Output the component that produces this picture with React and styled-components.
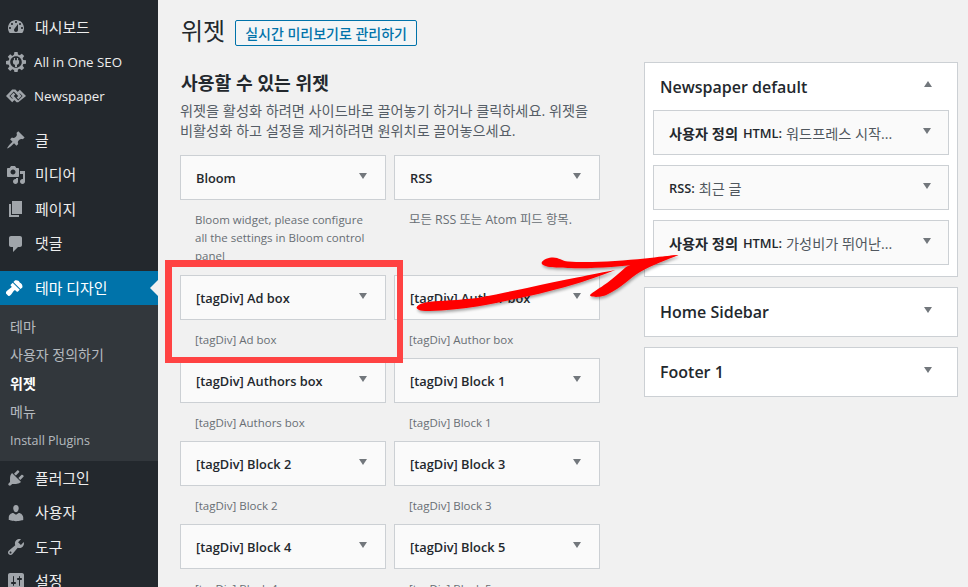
import React from 'react';
import styled, {createGlobalStyle} from 'styled-components';

const FONT = `"Open Sans", "Noto Sans CJK KR", sans-serif`;

const GlobalStyle = createGlobalStyle`
  html, body {
    margin: 0;
    padding: 0;
    height: 100%;
    overflow: hidden;
    background: #f1f1f1;
  }
  body {
    font-family: ${FONT};
    font-size: 13px;
    color: #23282d;
  }
`;

const Page = styled.div`
  position: relative;
  display: flex;
  width: 968px;
  height: 587px;
  overflow: hidden;
  background: #f1f1f1;
`;

const Sidebar = styled.nav`
  width: 158px;
  flex-shrink: 0;
  padding-top: 10px;
  background: #23282d;
`;

const MenuGroup = styled.div`
  margin-bottom: ${props => props.$gap || 0}px;
`;

const MenuItem = styled.div`
  position: relative;
  display: flex;
  align-items: center;
  height: 34.4px;
  padding-left: 6px;
  color: ${props => props.$current ? '#fff' : '#eee'};
  background: ${props => props.$current ? '#0073aa' : 'transparent'};
  font-size: ${props => props.$latin ? 13.3 : 14.9}px;
  svg {
    width: 20px;
    height: 20px;
    margin-right: ${props => props.$latin ? 8 : 9}px;
    flex-shrink: 0;
    fill: ${props => props.$current ? '#fff' : '#a0a5aa'};
  }
`;

const MenuLabel = styled.span`
  padding-bottom: ${props => props.$flat ? 0 : 2}px;
`;

const CurrentArrow = styled.span`
  position: absolute;
  right: 0;
  top: 9px;
  border: 8px solid transparent;
  border-right-color: #f1f1f1;
  border-left-width: 0;
`;

const SubMenu = styled.div`
  padding: 7px 0 7px;
  background: #32373c;
`;

const SubItem = styled.div`
  box-sizing: border-box;
  display: flex;
  align-items: center;
  height: 28.4px;
  padding-left: 10px;
  padding-top: ${props => props.$latin ? 2 : 0}px;
  padding-bottom: ${props => props.$latin ? 0 : 1}px;
  font-size: ${props => props.$latin ? 12.5 : 14}px;
  font-weight: ${props => props.$active ? 700 : 400};
  color: ${props => props.$active ? '#fff' : 'rgba(240,245,250,.7)'};
`;

const Content = styled.main`
  flex: 1;
  display: flex;
  min-width: 0;
  padding-left: 22px;
`;

const LeftColumn = styled.section`
  width: 420px;
  flex-shrink: 0;
`;

const TitleRow = styled.div`
  display: flex;
  align-items: center;
  gap: 10px;
  height: 27px;
  margin-top: 19px;
`;

const PageTitle = styled.h1`
  margin: 0;
  padding: 0 0 4px 1px;
  font-size: 24px;
  font-weight: 400;
  line-height: 26px;
  color: #23282d;
`;

const PreviewButton = styled.a`
  box-sizing: border-box;
  display: flex;
  align-items: center;
  height: 26px;
  padding: 0 9px;
  border: 1px solid #0073aa;
  border-radius: 2px;
  background: #f3f5f6;
  color: #0073aa;
  font-size: 14px;
  font-weight: 500;
  white-space: nowrap;
`;

const SectionTitle = styled.h2`
  margin: 25px 0 0;
  padding-left: 1px;
  font-size: 18.2px;
  font-weight: 700;
  line-height: 24px;
  color: #23282d;
`;

const Intro = styled.p`
  margin: 6px 0 0;
  font-size: 14.2px;
  line-height: 20px;
  color: #555d66;
  width: 425px;
  white-space: nowrap;
`;

const WidgetGrid = styled.div`
  display: grid;
  grid-template-columns: 206px 206px;
  column-gap: 8px;
  margin-top: 14px;
`;

const WidgetCell = styled.div`
  height: ${props => props.$tall ? 120 : 83}px;
`;

const WidgetBar = styled.div`
  position: relative;
  box-sizing: border-box;
  display: flex;
  align-items: center;
  height: 45px;
  padding: 0 35px 0 15px;
  border: 1px solid #ccd0d4;
  background: #fafafa;
  font-size: 12.8px;
  font-weight: 600;
  color: #23282d;
  white-space: nowrap;
  overflow: hidden;
`;

const Caret = styled.span`
  position: absolute;
  right: ${props => props.$right || 18}px;
  top: ${props => props.$top || 17}px;
  width: 0;
  height: 0;
  border-left: 4.5px solid transparent;
  border-right: 4.5px solid transparent;
  border-${props => props.$up ? 'bottom' : 'top'}: 6px solid #72777c;
`;

const WidgetDesc = styled.p`
  margin: 11px 0 0;
  padding: 0 15px;
  font-size: ${props => props.$ko ? 12.4 : 11.5}px;
  line-height: 18px;
  color: #686e74;
`;

const RightColumn = styled.aside`
  display: flex;
  flex-direction: column;
  gap: 10px;
  width: 314px;
  margin: 62px 0 0 44px;
`;

const SidebarBox = styled.div`
  position: relative;
  box-sizing: border-box;
  border: 1px solid #ccd0d4;
  background: #fff;
  height: ${props => props.$height || 50}px;
  padding: 0 8px;
`;

const BoxTitle = styled.h3`
  display: flex;
  align-items: center;
  height: ${props => props.$open ? 47 : 48}px;
  margin: 0;
  padding-left: 7px;
  font-size: 16px;
  font-weight: 600;
  color: #23282d;
`;

const BoxWidgets = styled.div`
  display: flex;
  flex-direction: column;
  gap: 10px;
`;

const BarStrong = styled.span`
  font-size: 14.2px;
  font-weight: 700;
  margin-right: 5px;
`;

const BarFaded = styled.span`
  font-size: 14.2px;
  font-weight: 400;
  color: #50575e;
  margin-left: 4px;
`;

const RedBox = styled.div`
  position: absolute;
  left: 165px;
  top: 260px;
  box-sizing: border-box;
  width: 238px;
  height: 103px;
  border: solid #ff4343;
  border-width: 7px 6px 6px 7px;
`;

const Arrow = styled.svg`
  position: absolute;
  left: 0;
  top: 0;
  pointer-events: none;
`;

const icons = {
  dashboard: 'M3.76 16h12.48c1.1-1.37 1.76-3.11 1.76-5 0-4.42-3.58-8-8-8s-8 3.58-8 8c0 1.89.66 3.63 1.76 5zM10 4c.55 0 1 .45 1 1s-.45 1-1 1-1-.45-1-1 .45-1 1-1zM6 6c.55 0 1 .45 1 1s-.45 1-1 1-1-.45-1-1 .45-1 1-1zm8 0c.55 0 1 .45 1 1s-.45 1-1 1-1-.45-1-1 .45-1 1-1zm-5.37 5.55L12 7v6c0 1.1-.9 2-2 2s-2-.9-2-2c0-.57.24-1.08.63-1.45zM4 10c.55 0 1 .45 1 1s-.45 1-1 1-1-.45-1-1 .45-1 1-1zm12 0c.55 0 1 .45 1 1s-.45 1-1 1-1-.45-1-1 .45-1 1-1z',
  post: 'M10.44 3.02l1.82-1.82 6.36 6.35-1.83 1.82c-1.05-.68-2.48-.57-3.41.36l-.75.75c-.92.93-1.04 2.35-.35 3.41l-1.83 1.82-2.41-2.41-2.8 2.79c-.42.42-3.38 2.71-3.8 2.29s1.86-3.39 2.28-3.81l2.79-2.79L4.1 9.36l1.83-1.82c1.05.69 2.48.57 3.4-.36l.75-.75c.93-.92 1.05-2.35.36-3.41z',
  media: 'M13 11V4c0-.55-.45-1-1-1h-1.67L9 1H5L3.67 3H2c-.55 0-1 .45-1 1v7c0 .55.45 1 1 1h10c.55 0 1-.45 1-1zM7 4.5c1.38 0 2.5 1.12 2.5 2.5S8.38 9.5 7 9.5 4.5 8.38 4.5 7 5.62 4.5 7 4.5zM14 6h5v10.5c0 1.38-1.12 2.5-2.5 2.5S14 17.88 14 16.5s1.12-2.5 2.5-2.5c.17 0 .34.02.5.05V9h-3V6zm-4 8.05V13h2v3.5c0 1.38-1.12 2.5-2.5 2.5S7 17.88 7 16.5 8.12 14 9.5 14c.17 0 .34.02.5.05z',
  page: 'M6 15V2h10v13H6zm-1 1h8v2H3V5h2v11z',
  comments: 'M5 2h9c1.1 0 2 .9 2 2v7c0 1.1-.9 2-2 2h-2l-5 5v-5H5c-1.1 0-2-.9-2-2V4c0-1.1.9-2 2-2z',
  appearance: 'M14.48 11.06L7.41 3.99l1.5-1.5c.5-.56 2.3-.47 3.51.32.91.59.95 1.14 1.45 1.91.8.5 1.35.54 1.94 1.45.79 1.21.88 3.01.32 3.51zM6.7 4.7l7.07 7.07-1.77 1.77c-.39.39-1.02.39-1.41 0l-1.06-1.06c-.39-.39-1.03-.39-1.42 0-.6.6-1.11 1.43-1.69 2.21-.78 1.06-2.1 3-3.2 3.3-.5 0-.9-.2-1.3-.6l-1.7-1.7c-.4-.4-.5-.8-.5-1.2.3-1.1 2.2-2.5 3.3-3.3.78-.58 1.61-1.09 2.21-1.69.39-.39.39-1.03 0-1.42L4.93 7.88c-.39-.39-.39-1.02 0-1.41z',
  plugins: 'M13.11 4.36L9.87 7.6 8 5.73l3.24-3.24c.35-.34 1.05-.2 1.56.32.52.51.66 1.21.31 1.55zm-8 1.77l.91-1.12 9.01 9.01-1.19.84c-.71.71-2.63 1.16-3.82 1.16H6.14L4.9 17.26c-.59.59-1.54.59-2.12 0-.59-.58-.59-1.53 0-2.12l1.24-1.24v-3.88c0-1.13.4-3.19 1.09-3.89zm7.26 3.97l3.24-3.24c.34-.35 1.04-.21 1.55.31.52.51.66 1.21.31 1.55l-3.24 3.25z',
  users: 'M10 9.25c-2.27 0-2.73-3.44-2.73-3.44C7 4.02 7.82 2 9.97 2c2.16 0 2.98 2.02 2.71 3.81 0 0-.41 3.44-2.68 3.44zm0 2.57L12.72 10c2.39 0 4.52 2.33 4.52 4.53v2.49s-3.65 1.13-7.24 1.13c-3.65 0-7.24-1.13-7.24-1.13v-2.49c0-2.25 1.94-4.48 4.47-4.48z',
  tools: 'M16.68 9.77c-1.34 1.34-3.3 1.67-4.95.99l-5.41 6.52c-.99.99-2.59.99-3.58 0s-.99-2.59 0-3.57l6.52-5.42c-.68-1.65-.35-3.61.99-4.95 1.28-1.28 3.12-1.62 4.72-1.06l-2.89 2.89 2.82 2.82 2.86-2.87c.53 1.58.18 3.39-1.08 4.65zM3.81 16.21c.4.39 1.04.39 1.43 0 .4-.4.4-1.04 0-1.43-.39-.4-1.03-.4-1.43 0-.39.39-.39 1.03 0 1.43z',
  settings: 'M18 16V4c0-1.1-.9-2-2-2H4c-1.1 0-2 .9-2 2v12c0 1.1.9 2 2 2h12c1.1 0 2-.9 2-2zM8 11h1c.55 0 1 .45 1 1s-.45 1-1 1H8v1.5c0 .28-.22.5-.5.5s-.5-.22-.5-.5V13H6c-.55 0-1-.45-1-1s.45-1 1-1h1V5.5c0-.28.22-.5.5-.5s.5.22.5.5V11zm5-2h-1c-.55 0-1-.45-1-1s.45-1 1-1h1V5.5c0-.28.22-.5.5-.5s.5.22.5.5V7h1c.55 0 1 .45 1 1s-.45 1-1 1h-1v5.5c0 .28-.22.5-.5.5s-.5-.22-.5-.5V9z',
  // gear with a plug cut out
  seo: 'M8.4 0h3.2l.4 2.6 1.7.7L15.8 1.7l2.4 2.4-1.6 2.1.7 1.7 2.7.4v3.4l-2.7.4-.7 1.7 1.6 2.1-2.4 2.4-2.1-1.6-1.7.7-.4 2.6H8.4L8 18l-1.7-.7-2.1 1.6-2.4-2.4 1.6-2.1-.7-1.7-2.7-.4V8.9l2.7-.4.7-1.7-1.6-2.1 2.4-2.4 2.1 1.6L8 2.6zM10 4.2c-3.2 0-5.8 2.6-5.8 5.8s2.6 5.8 5.8 5.8 5.8-2.6 5.8-5.8-2.6-5.8-5.8-5.8zM7.9 6h1.2v2.2h1.8V6h1.2v2.2h1v2.1c0 1.3-.9 2.3-2.1 2.5V15H9v-2.2c-1.2-.2-2.1-1.2-2.1-2.5V8.2h1z',
  // linked diamonds
  newspaper: 'M6.2 3.6L0 10l6.2 6.2 3.2-3.2-1.7-1.7-1.5 1.5L3.4 10l4.4-4.5 4.4 4.5-1.5 1.5 1.7 1.7 3.2-3.2-6.2-6.4zM13.8 3.8l-3.2 3.2 1.7 1.7 1.5-1.5 2.8 2.8-4.4 4.5L7.8 10l1.5-1.5-1.7-1.7-3.2 3.2 6.2 6.2h1.6L20 10z',
};

const Icon = ({name}) => (
  <svg viewBox="0 0 20 20"><path d={icons[name]}/></svg>
);

const topItems = [
  ['dashboard', '대시보드'],
  ['seo', 'All in One SEO', true],
  ['newspaper', 'Newspaper', true],
];

const contentItems = [
  ['post', '글'],
  ['media', '미디어'],
  ['page', '페이지'],
  ['comments', '댓글'],
];

const bottomItems = [
  ['plugins', '플러그인'],
  ['users', '사용자'],
  ['tools', '도구'],
  ['settings', '설정'],
];

const widgets = [
  {name: 'Bloom', desc: 'Bloom widget, please configure all the settings in Bloom control panel', tall: true},
  {name: 'RSS', desc: '모든 RSS 또는 Atom 피드 항목.', tall: true, ko: true},
  {name: '[tagDiv] Ad box', desc: '[tagDiv] Ad box'},
  {name: '[tagDiv] Author box', desc: '[tagDiv] Author box'},
  {name: '[tagDiv] Authors box', desc: '[tagDiv] Authors box'},
  {name: '[tagDiv] Block 1', desc: '[tagDiv] Block 1'},
  {name: '[tagDiv] Block 2', desc: '[tagDiv] Block 2'},
  {name: '[tagDiv] Block 3', desc: '[tagDiv] Block 3'},
  {name: '[tagDiv] Block 4', desc: '[tagDiv] Block 4'},
  {name: '[tagDiv] Block 5', desc: '[tagDiv] Block 5'},
];

const renderItems = items => items.map(([icon, label, latin]) => (
  <MenuItem key={label} $latin={latin}>
    <Icon name={icon}/>
    <MenuLabel $flat={latin}>{label}</MenuLabel>
  </MenuItem>
));

const App = () => {
  return (
    <Page>
      <GlobalStyle/>
      <Sidebar>
        <MenuGroup $gap={10}>{renderItems(topItems)}</MenuGroup>
        <MenuGroup $gap={10}>{renderItems(contentItems)}</MenuGroup>
        <MenuItem $current>
          <Icon name="appearance"/>
          <MenuLabel $flat>테마 디자인</MenuLabel>
          <CurrentArrow/>
        </MenuItem>
        <SubMenu>
          <SubItem>테마</SubItem>
          <SubItem>사용자 정의하기</SubItem>
          <SubItem $active>위젯</SubItem>
          <SubItem>메뉴</SubItem>
          <SubItem $latin>Install Plugins</SubItem>
        </SubMenu>
        {renderItems(bottomItems)}
      </Sidebar>

      <Content>
        <LeftColumn>
          <TitleRow>
            <PageTitle>위젯</PageTitle>
            <PreviewButton>실시간 미리보기로 관리하기</PreviewButton>
          </TitleRow>
          <SectionTitle>사용할 수 있는 위젯</SectionTitle>
          <Intro>
            위젯을 활성화 하려면 사이드바로 끌어놓기 하거나 클릭하세요. 위젯을<br/>
            비활성화 하고 설정을 제거하려면 원위치로 끌어놓으세요.
          </Intro>
          <WidgetGrid>
            {widgets.map(w => (
              <WidgetCell key={w.name} $tall={w.tall}>
                <WidgetBar>{w.name}<Caret/></WidgetBar>
                <WidgetDesc $ko={w.ko}>{w.desc}</WidgetDesc>
              </WidgetCell>
            ))}
          </WidgetGrid>
        </LeftColumn>

        <RightColumn>
          <SidebarBox $height={215}>
            <BoxTitle $open>Newspaper default<Caret $up $top={18} $right={25}/></BoxTitle>
            <BoxWidgets>
              <WidgetBar><BarStrong>사용자 정의</BarStrong>HTML:<BarFaded>워드프레스 시작...</BarFaded><Caret $right={17}/></WidgetBar>
              <WidgetBar>RSS:<BarFaded>최근 글</BarFaded><Caret $right={17}/></WidgetBar>
              <WidgetBar><BarStrong>사용자 정의</BarStrong>HTML:<BarFaded>가성비가 뛰어난...</BarFaded><Caret $right={17}/></WidgetBar>
            </BoxWidgets>
          </SidebarBox>
          <SidebarBox>
            <BoxTitle>Home Sidebar<Caret $top={19} $right={25}/></BoxTitle>
          </SidebarBox>
          <SidebarBox>
            <BoxTitle>Footer 1<Caret $top={19} $right={25}/></BoxTitle>
          </SidebarBox>
        </RightColumn>
      </Content>

      <RedBox/>
      <Arrow width="968" height="587" viewBox="0 0 968 587">
        <defs>
          <filter id="arrowShadow" x="-5%" y="-20%" width="110%" height="150%">
            <feGaussianBlur in="SourceAlpha" stdDeviation="1.5"/>
            <feOffset dx="1" dy="2"/>
            <feComponentTransfer><feFuncA type="linear" slope="0.35"/></feComponentTransfer>
            <feMerge>
              <feMergeNode/>
              <feMergeNode in="SourceGraphic"/>
            </feMerge>
          </filter>
        </defs>
        <g fill="#f00" filter="url(#arrowShadow)">
          <path d="M541.5 263C543 259 549 257.5 553 257.5C559 257.5 562 261 568 261.5C590 263 620 261 645 258.5C658 257 670 255.5 678.5 255C668 258.5 655 262 643 264C620 266.5 590 269 570 268C558 267.5 543 268 541.5 263Z"/>
          <path d="M416.5 307.5C418 304 424 302.5 432 301.5C450 300.5 465 299.5 477 298C495 295 512 291 527 288C545 284 562 280 577 277.5C592 274.5 606 271.5 615.5 270C605 274 590 279.5 577 283.5C560 288.5 543 293 527 296.5C510 300 492 304 477 306.5C460 309 445 310.5 430 311C423 311 417 310.5 416.5 307.5Z"/>
          <path d="M590 295C592 292.5 600 288 607 283C614 278 620 272 626 267C636 262 660 256.5 678.5 255C668 259.5 652 265 640 272C630 278 625 284 617 289C610 293.5 604 296.5 599 296.8C595 297 590 297 590 295Z"/>
        </g>
      </Arrow>
    </Page>
  );
};

export default App;
